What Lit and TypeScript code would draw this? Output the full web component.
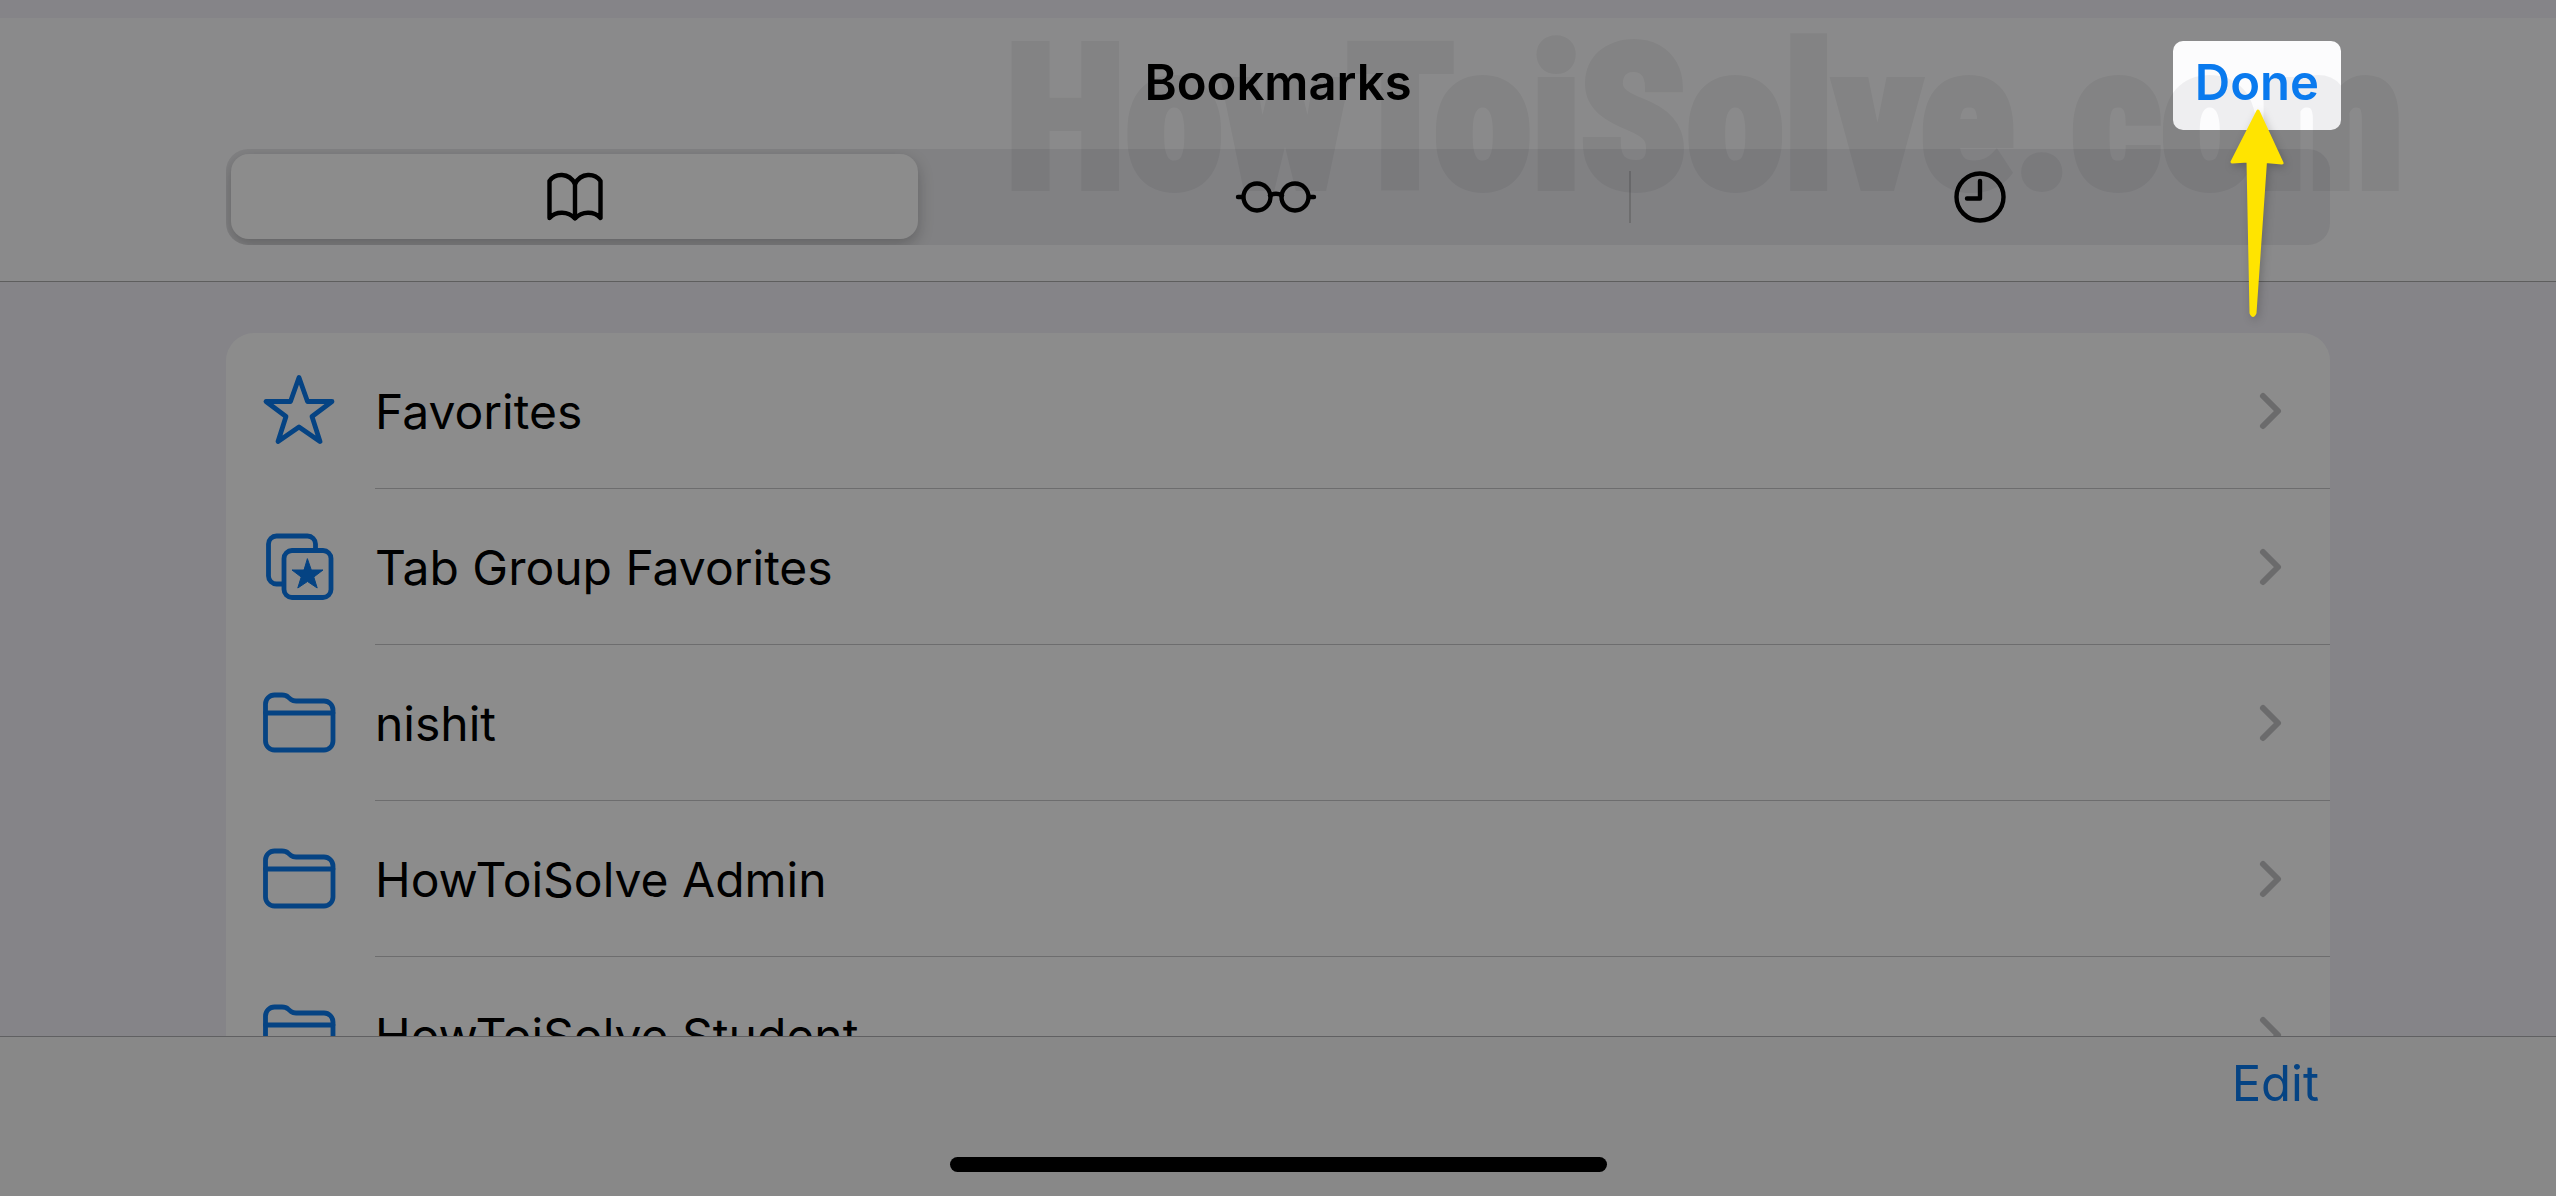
import { LitElement, html, css, svg } from "lit";
import { customElement, property, state } from "lit/decorators.js";

type IconName = "star" | "tabs" | "folder" | "book" | "glasses" | "clock" | "chevron";

const shapes = {
  star: svg`<path d="M36 2.500 L44.500 26.500 H69 L49 41.500 L57 66.500 L36 52 L15 66.500 L23 41.500 L3 26.500 H27.500 Z" />`,
  tabs: svg`
    <path d="M19.500 53 H13.500 a8 8 0 0 1 -8 -8 V13 a8 8 0 0 1 8 -8 H44.500 a8 8 0 0 1 8 8 V18" />
    <rect x="21" y="19.500" width="47" height="47" rx="8" />
    <path class="solid" d="M44.500 28 L48.300 39 H60 L50.800 46 L54.200 57 L44.500 50.500 L34.800 57 L38.200 46 L29 39 H40.700 Z" />`,
  folder: svg`
    <path d="M2.500 17 a9 9 0 0 1 9 -9 H19 q4 0 6 2 L28 12.500 q2 1.500 5 1.500 H61 a9 9 0 0 1 9 9 V54 a9 9 0 0 1 -9 9 H11.500 a9 9 0 0 1 -9 -9 Z" />
    <path d="M2.500 26 H70" />`,
  book: svg`
    <path d="M36 23 C30 11 16 12 10.500 20 V57 C17 50 29 50 36 57.500 C43 50 55 50 61.500 57 V20 C56 12 42 11 36 23 Z" />
    <path d="M36 22 V57" />`,
  glasses: svg`
    <circle cx="25" cy="36" r="13.500" /><circle cx="63" cy="36" r="13.500" />
    <path d="M38 34.500 Q44 31 50 34.500 M6 36 H11 M77 36 H82" />`,
  clock: svg`<circle cx="37" cy="36" r="23.500" /><path d="M37 20 V37.500 H24" />`,
  chevron: svg`<path d="M3 3 L18 18 L3 33" />`,
};

const boxes: Record<IconName, string> = {
  star: "0 0 72 72",
  tabs: "0 0 72 72",
  folder: "0 0 72 72",
  book: "0 0 72 72",
  glasses: "0 0 88 72",
  clock: "0 0 72 72",
  chevron: "0 0 21 36",
};

@customElement("line-icon")
export class LineIcon extends LitElement {
  @property({ reflect: true }) name: IconName = "star";

  static styles = css`
    :host {
      display: block;
      flex: none;
      width: 72px;
      height: 72px;
    }
    :host([name="glasses"]) {
      width: 88px;
    }
    :host([name="chevron"]) {
      width: 21px;
      height: 36px;
    }
    .drawing {
      display: block;
      width: 100%;
      height: 100%;
      overflow: visible;
      fill: none;
      stroke: currentColor;
      stroke-width: 4.4;
      stroke-linecap: round;
      stroke-linejoin: round;
    }
    :host(.mark) .drawing {
      stroke-width: 4.8;
    }
    :host([name="chevron"]) .drawing {
      stroke-width: 6;
    }
    .solid {
      fill: currentColor;
      stroke-width: 1;
    }
  `;

  render() {
    return html`<svg class="drawing" viewBox=${boxes[this.name]} aria-hidden="true">${shapes[this.name]}</svg>`;
  }
}

const tabs: { icon: IconName; label: string }[] = [
  { icon: "book", label: "Bookmarks" },
  { icon: "glasses", label: "Reading List" },
  { icon: "clock", label: "History" },
];

const folders: { icon: IconName; title: string }[] = [
  { icon: "star", title: "Favorites" },
  { icon: "tabs", title: "Tab Group Favorites" },
  { icon: "folder", title: "nishit" },
  { icon: "folder", title: "HowToiSolve Admin" },
  { icon: "folder", title: "HowToiSolve Student" },
];

@customElement("app-root")
export class AppRoot extends LitElement {
  @state() private selected = 0;

  static styles = css`
    :host {
      --side: 226px;
      --blue: #0a7aee;
      display: flex;
      flex-direction: column;
      box-sizing: border-box;
      height: 100vh;
      padding-top: 18px;
      overflow: hidden;
      background: #f2f1f8;
      color: #000;
      font: 400 48px/64px Inter, "Liberation Sans", sans-serif;
    }
    button {
      border: 0;
      padding: 0;
      background: none;
      color: inherit;
      font: inherit;
      cursor: pointer;
    }
    .header {
      position: relative;
      z-index: 1;
      flex: none;
      padding: 23px var(--side) 36px;
      border-bottom: 1px solid #acacac;
      background: #fcfcfd;
    }
    .bar {
      display: grid;
      grid-template-columns: 1fr auto 1fr;
      align-items: stretch;
      height: 89px;
      margin-right: -11px;
      margin-left: -11px;
      font-size: 49px;
      font-weight: 600;
    }
    .title {
      grid-column: 2;
      margin: 0;
      padding-top: 10px;
      font: inherit;
    }
    .spotlight {
      position: relative;
      z-index: 2;
      justify-self: end;
      display: flex;
      border-radius: 10px;
      box-shadow: 0 0 0 4000px rgba(0, 0, 0, 0.45);
    }
    .done {
      padding: 0 22px 6px;
      color: var(--blue);
    }
    .arrow {
      position: absolute;
      top: 65px;
      left: 50%;
      width: 64px;
      height: 216px;
      margin-left: -32px;
      pointer-events: none;
      filter: drop-shadow(2px 3px 4px rgba(0, 0, 0, 0.2));
    }
    .watermark {
      position: absolute;
      z-index: 1;
      top: 0;
      right: 152px;
      color: #00001e;
      opacity: 0.05;
      -webkit-text-stroke: 10px #00001e;
      font: 700 196px/202px Impact, "Liberation Sans Narrow", "Roboto Condensed", "Open Sans Condensed", "Liberation Sans", sans-serif;
      pointer-events: none;
      white-space: nowrap;
    }
    .segments {
      display: grid;
      grid-template-columns: repeat(3, 1fr);
      height: 96px;
      margin-top: 19px;
      overflow: hidden;
      border-radius: 22px;
      background: #ebebee;
    }
    .segment {
      display: grid;
      place-items: center;
      margin: 5px 9px 6px 5px;
      border-radius: 18px;
    }
    .segment.on {
      background: #fff;
      box-shadow: 0 6px 16px rgba(0, 0, 0, 0.24);
    }
    .segment:last-child {
      background: linear-gradient(#c8c8cb, #c8c8cb) left center / 2px 52px no-repeat;
      margin-right: 0;
      margin-left: 0;
      border-radius: 0;
    }
    .content {
      flex: 1;
      min-height: 0;
      overflow: hidden;
      padding: 51px var(--side) 0;
    }
    .list {
      margin: 0;
      padding: 0;
      overflow: hidden;
      list-style: none;
      border-radius: 28px 28px 0 0;
      background: #fff;
    }
    .row {
      display: flex;
      align-items: center;
      width: 100%;
      height: 156px;
      padding-left: 37px;
      text-align: left;
    }
    .mark {
      color: var(--blue);
    }
    .body {
      display: flex;
      flex: 1;
      align-items: center;
      box-sizing: border-box;
      height: 156px;
      margin-left: 40px;
      padding-right: 49px;
      border-bottom: 1px solid #c6c6c8;
    }
    .name {
      flex: 1;
      padding-top: 3px;
    }
    .more {
      color: #c3c3c5;
    }
    .footer {
      display: flex;
      flex: none;
      flex-direction: column;
      align-items: center;
      justify-content: space-between;
      box-sizing: border-box;
      height: 160px;
      padding: 15px 237px 24px;
      border-top: 1px solid #b0b0b3;
      background: #f7f7f8;
    }
    .edit {
      align-self: flex-end;
      color: var(--blue);
      font-size: 49px;
    }
    .home {
      width: 657px;
      height: 15px;
      border-radius: 8px;
      background: #000;
    }
  `;

  render() {
    return html`
      <header class="header">
        <div class="watermark" aria-hidden="true">HowToiSolve.com</div>
        <div class="bar">
          <h1 class="title">Bookmarks</h1>
          <div class="spotlight">
            <button class="done">Done</button>
            <svg class="arrow" viewBox="0 0 64 216" aria-hidden="true">
              <path
                d="M33 5 L57 57 L40.500 55.500 L30 207 Q28 212 26 207 L23 55 L7 56 Z"
                fill="#ffe400"
                stroke="#ffe400"
                stroke-width="3"
                stroke-linejoin="round"
              />
            </svg>
          </div>
        </div>
        <nav class="segments" aria-label="Sections">
          ${tabs.map(
            (tab, i) => html`<button
              class="segment ${i === this.selected ? "on" : ""}"
              aria-label=${tab.label}
              aria-pressed=${i === this.selected}
              @click=${() => (this.selected = i)}
            >
              <line-icon name=${tab.icon}></line-icon>
            </button>`
          )}
        </nav>
      </header>
      <main class="content">
        <ul class="list">
          ${folders.map(
            (folder) => html`<li>
              <button class="row">
                <line-icon class="mark" name=${folder.icon}></line-icon>
                <span class="body">
                  <span class="name">${folder.title}</span>
                  <line-icon class="more" name="chevron"></line-icon>
                </span>
              </button>
            </li>`
          )}
        </ul>
      </main>
      <footer class="footer">
        <button class="edit">Edit</button>
        <div class="home"></div>
      </footer>
    `;
  }
}
